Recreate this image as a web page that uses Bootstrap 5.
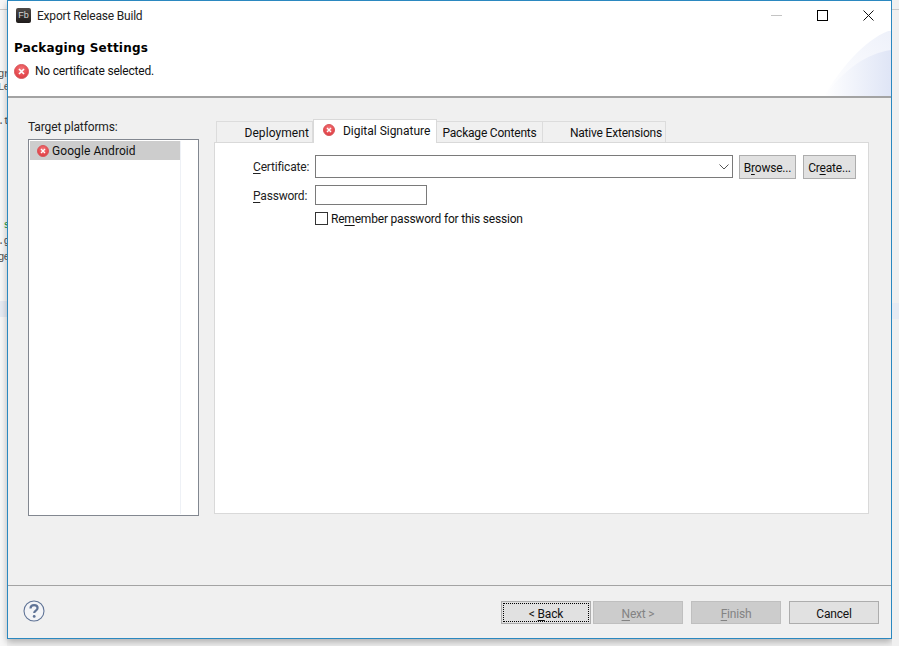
<!DOCTYPE html>
<html lang="en">
<head>
<meta charset="utf-8">
<title>Export Release Build</title>
<link href="https://cdn.jsdelivr.net/npm/bootstrap@5.3.0/dist/css/bootstrap.min.css" rel="stylesheet">
<style>
html,body{margin:0;height:646px;overflow:hidden;background:#f0f0f0}
body{font-family:Roboto,"Open Sans",sans-serif;font-size:12px;line-height:16px;color:#111;--sp:-.2px;letter-spacing:var(--sp)}
u{text-decoration-thickness:1px;text-underline-offset:2px}
.stage{width:899px;height:646px;display:flex;align-items:flex-start;overflow:hidden}
.behind{width:7px;height:646px;flex:none;overflow:hidden;background:#f7f7f7;font-family:"Liberation Mono",monospace;font-size:11px;line-height:13px;white-space:nowrap;display:flex;flex-direction:column}
.behind-top{height:10px;flex:none;width:7px;border-bottom:1px solid #c9c9c9}
.behind-line{width:7px;overflow:hidden;flex:none;height:13px;color:#555;letter-spacing:-1px;display:flex;justify-content:flex-end}
.behind-line span{flex:none;margin-right:-2px}
.behind-band{width:7px;height:16px;background:#e6ebf3;flex:none}
.dlg{width:885px;height:639px;flex:none;border:1px solid #2b88c0;background:#f0f0f0;display:flex;flex-direction:column;box-shadow:0 3px 7px rgba(0,0,0,.28)}
.behind-right{flex:1;height:646px;background:#f0f0f0}
.behind-right .rline{height:10px;border-bottom:1px solid #c9c9c9}
.behind-right .rband{height:16px;background:#e6ebf3;margin-top:293px}
.titlebar{height:30px;background:#fff;padding:7px 0 0 8px;flex:none}
.app-ico{width:15px;height:15px;background:linear-gradient(#4f4a48,#1e1b1a);border-radius:2px;color:#d6d6d6;font-size:9px;line-height:15px;text-align:center;font-family:"Liberation Sans",sans-serif;letter-spacing:0;flex:none}
.win-title{margin-left:6px;color:#222;line-height:16px}
.win-btns{margin-left:auto;gap:35px;padding-right:17px;margin-top:2px}
.head{height:67px;background:#fff;border-bottom:2px solid #a3a3a3;flex:none;padding:8px 0 0 6px;position:relative;overflow:hidden}
.head h1{font:700 12px/18px "DejaVu Sans",sans-serif;letter-spacing:.2px;margin:0;color:#000}
.head-msg{margin-top:6px;gap:6px;line-height:16px}
.head-art{position:absolute;right:0;bottom:0;width:75px;height:68px}
.content{flex:1;min-height:0;display:flex;padding:21px 22px 0 20px;gap:15px}
.plat{width:171px;flex:none}
.plat-lbl{height:20px;line-height:16px;color:#222;letter-spacing:-.13px}
.plat-box{height:377px;border:1px solid #828790;background:#fff;padding:1px;display:flex}
.plat-col{width:150px;border-right:1px solid #eef1f6;flex:none;height:100%;box-sizing:content-box}
.plat-row{height:19px;background:#cdcdcd;padding-left:7px;gap:3px;color:#111;width:150px;letter-spacing:.08px}
.tabsarea{width:655px;flex:none;padding-top:2px}
.tabstrip.nav{height:21px;padding-left:2px;flex-wrap:nowrap;align-items:flex-end;position:relative;z-index:1}
.wtab{height:21px;border:1px solid #dcdcdc;border-bottom:0;background:#f0f0f0;color:#111;text-align:right;padding:3px 3px 0 0;line-height:17px;flex:none;white-space:nowrap}
.wtab + .wtab{border-left:0}
.wtab.wide{letter-spacing:.08px}
.wtab.on{height:24px;background:#fff;border:1px solid #d9d9d9;border-bottom:0;margin-bottom:-1px;padding:3px 0 0 9px;text-align:left;line-height:17px;display:flex;gap:8px;align-items:flex-start;position:relative;letter-spacing:-.02px}
.wtab.on svg{margin-top:1px}
.wtab.mid{text-align:center;padding:3px 0 0}
.panel{height:372px;background:#fff;border:1px solid #d9d9d9;padding:12px 12px 0 0}
.frow{display:flex;align-items:flex-start}
.flbl{width:100px;flex:none;padding:3px 0 0 38px;color:#222;white-space:nowrap}
.row-cert .flbl{padding-top:4px}
.wcombo.form-select{width:418px;height:23px;flex:none;border:1px solid #7a7a7a;border-radius:0;padding:0;box-shadow:none;background-size:10px 8px;background-position:right 3px center;background-image:url("data:image/svg+xml,%3csvg xmlns='http://www.w3.org/2000/svg' viewBox='0 0 10 8'%3e%3cpath fill='none' stroke='%23555' d='M.5 1.5 5 6l4.5-4.5'/%3e%3c/svg%3e")}
.wbtn.btn{height:24px;border-radius:0;border:1px solid #adadad;background:#e1e1e1;color:#111;font-size:12px;line-height:16px;padding:2px 0 0;--bs-btn-hover-bg:#e1e1e1;letter-spacing:var(--sp)}
.wbrowse.btn{width:57px;margin-left:6px}
.wcreate.btn{width:53px;margin-left:7px}
.row-pass{margin-top:6px}
.wpass.form-control{width:112px;height:20px;border:1px solid #7a7a7a;border-radius:0;padding:0;box-shadow:none;flex:none}
.wcheck{margin:6px 0 0 100px;gap:3px;line-height:13px}
.wcheck span{padding-top:2px}
.wcheck .form-check-input{width:13px;height:13px;margin:0;border:1px solid #333;border-radius:0;flex:none}
.foot{height:53px;flex:none;border-top:1px solid #a3a3a3;padding:15px 12px 0 15px;display:flex;align-items:flex-start}
.foot>svg{margin-top:-1px}
.fbtn.btn{width:90px;height:23px;border-radius:0;border:1px solid #adadad;background:#e1e1e1;color:#111;font-size:12px;line-height:16px;padding:2px 0 0;letter-spacing:var(--sp);position:relative}
.fbtn.off.btn{background:#cccccc;border-color:#bfbfbf;color:#838383;opacity:1}
.focusdot{outline:1px dotted #000;outline-offset:-3px}
.fbtns{margin-left:auto;gap:8px}
.fbtns .tight{margin-right:-6px}
</style>
</head>
<body>
<div class="stage">
  <div class="behind">
    <div class="behind-top"></div>
    <div class="behind-line" style="margin-top:58px"><span>gr</span></div>
    <div class="behind-line"><span>.Le</span></div>
    <div class="behind-line" style="margin-top:21px"><span>.t</span></div>
    <div class="behind-line" style="margin-top:91px;color:#1a9a3c"><span>s</span></div>
    <div class="behind-line" style="margin-top:3px"><span>.g</span></div>
    <div class="behind-line" style="margin-top:3px"><span>ge</span></div>
    <div class="behind-band" style="margin-top:37px"></div>
  </div>
  <div class="dlg">
    <div class="titlebar d-flex align-items-start">
      <div class="app-ico">Fb</div>
      <div class="win-title">Export Release Build</div>
      <div class="win-btns d-flex align-items-center">
        <svg width="11" height="11" viewBox="0 0 11 11"><path d="M0 5.5h11" stroke="#c4c4c4" fill="none"/></svg>
        <svg width="11" height="11" viewBox="0 0 11 11"><rect x=".5" y=".5" width="10" height="10" fill="none" stroke="#000"/></svg>
        <svg width="11" height="11" viewBox="0 0 11 11"><path d="M.5.5l10 10M10.5.5l-10 10" fill="none" stroke="#111"/></svg>
      </div>
    </div>
    <div class="head">
      <svg class="head-art" viewBox="0 0 75 68" aria-hidden="true">
        <defs><linearGradient id="ga" x1="0" x2="1" y1="1" y2="0"><stop offset="0" stop-color="#fff"/><stop offset="1" stop-color="#eef1fa"/></linearGradient><linearGradient id="gb" x1="0" x2="1" y1=".6" y2=".6"><stop offset="0" stop-color="#fff"/><stop offset="1" stop-color="#dfe5f6"/></linearGradient>
        <radialGradient id="er" cx=".5" cy=".35" r=".7"><stop offset="0" stop-color="#f4787c"/><stop offset=".7" stop-color="#e5484d"/><stop offset="1" stop-color="#d13a40"/></radialGradient></defs>
        <path d="M8 68C25 40 50 10 75 2V68Z" fill="url(#ga)"/>
        <path d="M8 68C30 40 50 26 75 22V68Z" fill="url(#gb)"/>
      </svg>
      <h1>Packaging Settings</h1>
      <div class="head-msg d-flex align-items-center">
        <svg width="15" height="15" viewBox="0 0 15 15"><circle cx="7.5" cy="7.5" r="7" fill="url(#er)" stroke="#d8585c"/><path d="M5 5l5 5M10 5l-5 5" stroke="#fff" stroke-width="1.7"/></svg>
        <span>No certificate selected.</span>
      </div>
    </div>
    <div class="content">
      <div class="plat">
        <div class="plat-lbl">Target platforms:</div>
        <div class="plat-box">
          <div class="plat-col">
            <div class="plat-row d-flex align-items-center">
              <svg width="12" height="12" viewBox="0 0 12 12"><circle cx="6" cy="6" r="5.5" fill="url(#er)" stroke="#d8585c"/><path d="M4 4l4 4M8 4l-4 4" stroke="#fff" stroke-width="1.4"/></svg>
              <span>Google Android</span>
            </div>
          </div>
        </div>
      </div>
      <div class="tabsarea">
        <div class="tabstrip nav">
          <div class="wtab wide" style="width:97px">Deployment</div>
          <div class="wtab on" style="width:124px">
            <svg width="12" height="12" viewBox="0 0 12 12"><circle cx="6" cy="6" r="5.5" fill="url(#er)" stroke="#d8585c"/><path d="M4 4l4 4M8 4l-4 4" stroke="#fff" stroke-width="1.4"/></svg>
            <span>Digital Signature</span>
          </div>
          <div class="wtab mid" style="width:106px">Package Contents</div>
          <div class="wtab" style="width:123px">Native Extensions</div>
        </div>
        <div class="panel">
          <div class="frow row-cert">
            <div class="flbl"><u>C</u>ertificate:</div>
            <select class="wcombo form-select" aria-label="Certificate"></select>
            <button class="wbtn wbrowse btn" type="button">B<u>r</u>owse...</button>
            <button class="wbtn wcreate btn" type="button">Cr<u>e</u>ate...</button>
          </div>
          <div class="frow row-pass">
            <div class="flbl"><u>P</u>assword:</div>
            <input class="wpass form-control" type="password" aria-label="Password">
          </div>
          <div class="wcheck d-flex align-items-center">
            <input class="form-check-input" type="checkbox" aria-label="Remember">
            <span>Re<u>m</u>ember password for this session</span>
          </div>
        </div>
      </div>
    </div>
    <div class="foot">
      <svg width="22" height="22" viewBox="0 0 22 22"><circle cx="11" cy="11" r="10" fill="#f3f4f7" stroke="#5f7396" stroke-width="1.1"/><path d="M7.5 8.5c0-2.2 1.6-3.4 3.6-3.4s3.5 1.1 3.5 3c0 2.6-3.4 2.5-3.4 5" fill="none" stroke="#5f7396" stroke-width="2.2"/><circle cx="11.2" cy="16.4" r="1.4" fill="#5f7396"/></svg>
      <div class="fbtns d-flex">
        <button class="fbtn btn focusdot tight" type="button">&lt; <u>B</u>ack</button>
        <button class="fbtn off btn" type="button"><u>N</u>ext &gt;</button>
        <button class="fbtn off btn" type="button"><u>F</u>inish</button>
        <button class="fbtn btn" type="button">Cancel</button>
      </div>
    </div>
  </div>
  <div class="behind-right"><div class="rline"></div><div class="rband"></div></div>
</div>
</body>
</html>
